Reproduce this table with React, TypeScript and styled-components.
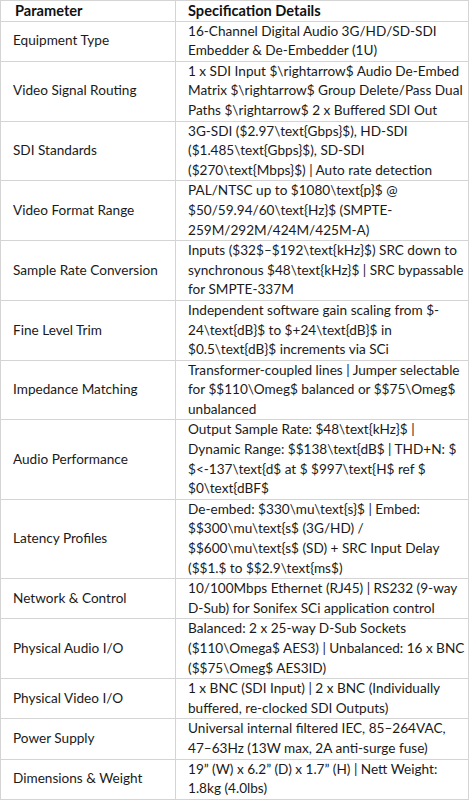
import React from "react";
import styled, { createGlobalStyle } from "styled-components";

const GlobalStyle = createGlobalStyle`
  html, body {
    margin: 0;
    padding: 0;
    background: #fff;
  }
  body {
    font-family: Lato, "Open Sans", "Liberation Sans", sans-serif;
    color: #1a1a1a;
  }
`;

type Spec = { name: string; lines: string[] };

const specs: Spec[] = [
  {
    name: "Equipment Type",
    lines: ["16-Channel Digital Audio 3G/HD/SD-SDI", "Embedder & De-Embedder (1U)"],
  },
  {
    name: "Video Signal Routing",
    lines: [
      String.raw`1 x SDI Input $\rightarrow$ Audio De-Embed`,
      String.raw`Matrix $\rightarrow$ Group Delete/Pass Dual`,
      String.raw`Paths $\rightarrow$ 2 x Buffered SDI Out`,
    ],
  },
  {
    name: "SDI Standards",
    lines: [
      String.raw`3G-SDI ($2.97\text{Gbps}$), HD-SDI`,
      String.raw`($1.485\text{Gbps}$), SD-SDI`,
      String.raw`($270\text{Mbps}$) | Auto rate detection`,
    ],
  },
  {
    name: "Video Format Range",
    lines: [
      String.raw`PAL/NTSC up to $1080\text{p}$ @`,
      String.raw`$50/59.94/60\text{Hz}$ (SMPTE-`,
      "259M/292M/424M/425M-A)",
    ],
  },
  {
    name: "Sample Rate Conversion",
    lines: [
      String.raw`Inputs ($32$–$192\text{kHz}$) SRC down to`,
      String.raw`synchronous $48\text{kHz}$ | SRC bypassable`,
      "for SMPTE-337M",
    ],
  },
  {
    name: "Fine Level Trim",
    lines: [
      "Independent software gain scaling from $-",
      String.raw`24\text{dB}$ to $+24\text{dB}$ in`,
      String.raw`$0.5\text{dB}$ increments via SCi`,
    ],
  },
  {
    name: "Impedance Matching",
    lines: [
      "Transformer-coupled lines | Jumper selectable",
      String.raw`for $$110\Omeg$ balanced or $$75\Omeg$`,
      "unbalanced",
    ],
  },
  {
    name: "Audio Performance",
    lines: [
      String.raw`Output Sample Rate: $48\text{kHz}$ |`,
      String.raw`Dynamic Range: $$138\text{dB$ | THD+N: $`,
      String.raw`$<-137\text{d$ at $ $997\text{H$ ref $`,
      String.raw`$0\text{dBF$`,
    ],
  },
  {
    name: "Latency Profiles",
    lines: [
      String.raw`De-embed: $330\mu\text{s}$ | Embed:`,
      String.raw`$$300\mu\text{s$ (3G/HD) /`,
      String.raw`$$600\mu\text{s$ (SD) + SRC Input Delay`,
      String.raw`($$1.$ to $$2.9\text{ms$)`,
    ],
  },
  {
    name: "Network & Control",
    lines: [
      "10/100Mbps Ethernet (RJ45) | RS232 (9-way",
      "D-Sub) for Sonifex SCi application control",
    ],
  },
  {
    name: "Physical Audio I/O",
    lines: [
      "Balanced: 2 x 25-way D-Sub Sockets",
      String.raw`($110\Omega$ AES3) | Unbalanced: 16 x BNC`,
      String.raw`($$75\Omeg$ AES3ID)`,
    ],
  },
  {
    name: "Physical Video I/O",
    lines: ["1 x BNC (SDI Input) | 2 x BNC (Individually", "buffered, re-clocked SDI Outputs)"],
  },
  {
    name: "Power Supply",
    lines: ["Universal internal filtered IEC, 85–264VAC,", "47–63Hz (13W max, 2A anti-surge fuse)"],
  },
  {
    name: "Dimensions & Weight",
    lines: ["19” (W) x 6.2” (D) x 1.7” (H) | Nett Weight:", "1.8kg (4.0lbs)"],
  },
];

const Table = styled.table`
  width: 469px;
  border-collapse: collapse;
  table-layout: fixed;
  font-size: 13.6px;
  line-height: 19.6px;
`;

const HeadCell = styled.th<{ $first?: boolean }>`
  border: 1px solid #d4d4d4;
  text-align: left;
  font-weight: 700;
  font-size: 14.6px;
  padding: 0 4px 0 ${(p) => (p.$first ? "14px" : "12px")};
  width: ${(p) => (p.$first ? "175px" : "auto")};
  box-sizing: border-box;
  vertical-align: middle;
  color: #111;
`;

const ParamCell = styled.td`
  border: 1px solid #d4d4d4;
  padding: 0 4px 0 12px;
  vertical-align: middle;
  white-space: nowrap;
`;

const DetailCell = styled.td`
  border: 1px solid #d4d4d4;
  padding: 0 2px 0 12px;
  font-size: 13.6px;
  vertical-align: middle;
  white-space: pre;
`;

export default function App() {
  return (
    <>
      <GlobalStyle />
      <Table>
        <thead>
          <tr>
            <HeadCell $first>Parameter</HeadCell>
            <HeadCell>Specification Details</HeadCell>
          </tr>
        </thead>
        <tbody>
          {specs.map((s) => (
            <tr key={s.name}>
              <ParamCell>{s.name}</ParamCell>
              <DetailCell>{s.lines.join("\n")}</DetailCell>
            </tr>
          ))}
        </tbody>
      </Table>
    </>
  );
}
